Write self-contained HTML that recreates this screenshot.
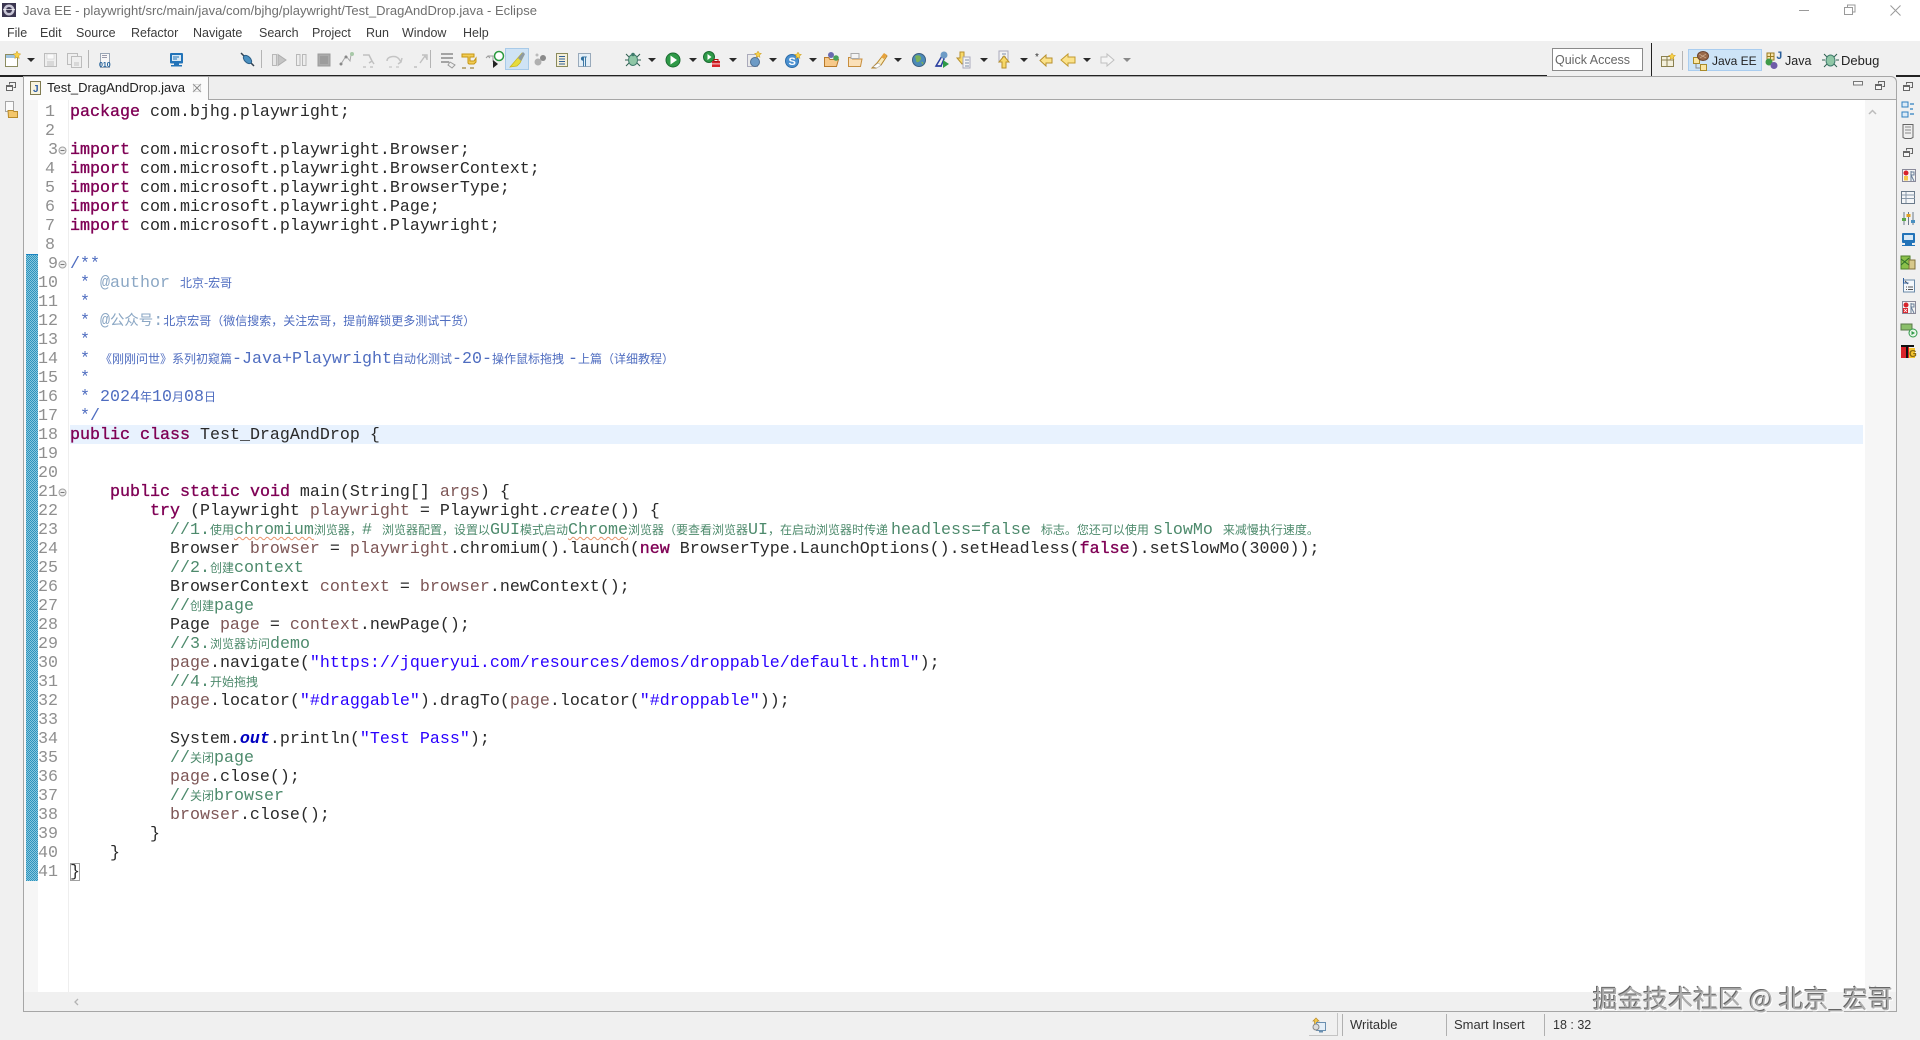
<!DOCTYPE html>
<html lang="zh-CN">
<head>
<meta charset="utf-8">
<title>Java EE - Eclipse</title>
<style>
html,body{margin:0;padding:0;background:#fff;}
body{width:1920px;height:1040px;position:relative;overflow:hidden;font-family:"Liberation Sans","Noto Sans CJK SC",sans-serif;}
.a{position:absolute;}
.t{position:absolute;white-space:pre;font-family:"Liberation Sans","Noto Sans CJK SC",sans-serif;}
.m{top:25px;font-size:12.5px;line-height:16px;color:#3c3c3c;}
.l{position:absolute;left:70px;height:19px;line-height:19px;margin-top:1px;white-space:pre;font-family:"Liberation Mono",monospace;font-size:16.667px;color:#2a2a2a;}
.n{position:absolute;left:30px;width:28px;text-align:right;height:19px;line-height:19px;margin-top:1px;font-family:"Liberation Mono",monospace;font-size:16.667px;color:#8f8f8f;}
.k{color:#7f0055;-webkit-text-stroke:.35px #7f0055;}
.v{color:#7d5656;}
.c{color:#4d8a6c;}
.d{color:#4f6dc0;}
.g{color:#8ba7c4;}
.s{color:#2a00ff;}
.z{font-family:"Noto Sans CJK SC",sans-serif;font-size:12px;line-height:12px;}
.q{text-decoration:underline wavy #e8946a 1px;text-underline-offset:2px;}
</style>
</head>
<body>
<!-- backgrounds -->
<div class="a" style="left:0;top:41px;width:1920px;height:999px;background:#f0f0f0;"></div>
<div class="a" style="left:0;top:75px;width:1547px;height:2px;background:#222;"></div>
<div class="a" style="left:1896px;top:75px;width:24px;height:2px;background:#222;"></div>
<div class="a" style="left:1651px;top:43px;width:1px;height:33px;background:#222;"></div>
<!-- editor pane -->
<div class="a" style="left:23px;top:76px;width:1874px;height:936px;box-sizing:border-box;border:1px solid #a6a6a6;border-top-right-radius:6px;background:#eeeeee;"></div>
<div class="a" style="left:24px;top:99px;width:1872px;height:1px;background:#a6a6a6;"></div>
<div class="a" style="left:24px;top:100px;width:1872px;height:892px;background:#fff;"></div>
<div class="a" style="left:24px;top:100px;width:14px;height:892px;background:#f6f6f6;"></div>
<div class="a" style="left:68px;top:100px;width:1px;height:892px;background:#eeeeee;"></div>
<div class="a" style="left:1865px;top:100px;width:31px;height:892px;background:#f6f6f6;"></div>
<div class="a" style="left:24px;top:992px;width:1872px;height:19px;background:#f0f0f0;"></div>
<!-- change ruler -->
<div class="a" style="left:26px;top:254px;width:12px;height:627px;background-color:#3f9fc4;background-image:conic-gradient(#86c7de 25%,#2e93bd 0 50%,#86c7de 0 75%,#2e93bd 0);background-size:2px 2px;"></div>
<div class="a" style="left:26px;top:254px;width:12px;height:1px;background:#1a84c0;"></div>
<!-- tab -->
<div class="a" style="left:24px;top:76px;width:185px;height:24px;box-sizing:border-box;background:#fbfbfb;border-right:1px solid #a6a6a6;border-top:1px solid #a6a6a6;"></div>
<div class="t" style="left:47px;top:80px;font-size:13px;line-height:16px;color:#1e1e1e;">Test_DragAndDrop.java</div>
<!-- current line -->
<div class="a" style="left:70px;top:425px;width:1793px;height:19px;background:#e8f2fe;"></div>
<!-- bracket match -->
<div class="a" style="left:70px;top:863px;width:10px;height:18px;box-sizing:border-box;border:1px solid #a0a0a0;"></div>

<!-- title + menu -->
<div class="t" style="left:23px;top:3px;font-size:13px;letter-spacing:.02px;line-height:16px;color:#6f6f6f;">Java EE - playwright/src/main/java/com/bjhg/playwright/Test_DragAndDrop.java - Eclipse</div>
<div class="t m" style="left:7px;">File</div>
<div class="t m" style="left:40px;">Edit</div>
<div class="t m" style="left:76px;">Source</div>
<div class="t m" style="left:131px;">Refactor</div>
<div class="t m" style="left:193px;">Navigate</div>
<div class="t m" style="left:259px;">Search</div>
<div class="t m" style="left:312px;">Project</div>
<div class="t m" style="left:366px;">Run</div>
<div class="t m" style="left:402px;">Window</div>
<div class="t m" style="left:463px;">Help</div>

<!-- quick access + perspectives -->
<div class="a" style="left:1552px;top:48px;width:91px;height:23px;box-sizing:border-box;background:#fff;border:1px solid #8a8a8a;"></div>
<div class="t" style="left:1555px;top:52px;font-size:12.5px;line-height:16px;color:#666;">Quick Access</div>
<div class="a" style="left:1682px;top:51px;width:1px;height:19px;background:#b4b4b4;"></div>
<div class="a" style="left:1688px;top:49px;width:74px;height:22px;box-sizing:border-box;background:#cde4f7;border:1px solid #aacdef;"></div>
<div class="t" style="left:1712px;top:53px;font-size:12px;line-height:16px;color:#222;">Java EE</div>
<div class="t" style="left:1785px;top:53px;font-size:12.5px;line-height:16px;color:#222;">Java</div>
<div class="t" style="left:1841px;top:53px;font-size:13px;line-height:16px;color:#222;">Debug</div>

<!-- status -->
<div class="a" style="left:1309px;top:1013px;width:29px;height:23px;box-sizing:border-box;border:1px solid #c4c4c4;border-top:0;border-left:0;"></div>
<div class="a" style="left:1342px;top:1014px;width:1px;height:22px;background:#b0b0b0;"></div>
<div class="a" style="left:1446px;top:1014px;width:1px;height:22px;background:#b0b0b0;"></div>
<div class="a" style="left:1544px;top:1014px;width:1px;height:22px;background:#b0b0b0;"></div>
<div class="t" style="left:1350px;top:1017px;font-size:13px;line-height:16px;color:#333;">Writable</div>
<div class="t" style="left:1454px;top:1017px;font-size:13px;line-height:16px;color:#333;">Smart Insert</div>
<div class="t" style="left:1553px;top:1017px;font-size:12.5px;line-height:16px;color:#333;">18 : 32</div>

<!-- line numbers -->
<div class="n" style="top:102px;width:25px">1</div><div class="n" style="top:121px;width:25px">2</div><div class="n" style="top:140px">3</div><div class="n" style="top:159px;width:25px">4</div><div class="n" style="top:178px;width:25px">5</div><div class="n" style="top:197px;width:25px">6</div><div class="n" style="top:216px;width:25px">7</div><div class="n" style="top:235px;width:25px">8</div><div class="n" style="top:254px;width:28px">9</div><div class="n" style="top:273px">10</div><div class="n" style="top:292px">11</div><div class="n" style="top:311px">12</div><div class="n" style="top:330px">13</div><div class="n" style="top:349px">14</div><div class="n" style="top:368px">15</div><div class="n" style="top:387px">16</div><div class="n" style="top:406px">17</div><div class="n" style="top:425px">18</div><div class="n" style="top:444px">19</div><div class="n" style="top:463px">20</div><div class="n" style="top:482px">21</div><div class="n" style="top:501px">22</div><div class="n" style="top:520px">23</div><div class="n" style="top:539px">24</div><div class="n" style="top:558px">25</div><div class="n" style="top:577px">26</div><div class="n" style="top:596px">27</div><div class="n" style="top:615px">28</div><div class="n" style="top:634px">29</div><div class="n" style="top:653px">30</div><div class="n" style="top:672px">31</div><div class="n" style="top:691px">32</div><div class="n" style="top:710px">33</div><div class="n" style="top:729px">34</div><div class="n" style="top:748px">35</div><div class="n" style="top:767px">36</div><div class="n" style="top:786px">37</div><div class="n" style="top:805px">38</div><div class="n" style="top:824px">39</div><div class="n" style="top:843px">40</div><div class="n" style="top:862px">41</div>

<!-- code -->
<div class="l" style="top:102px"><span class="k">package</span> com.bjhg.playwright;</div>
<div class="l" style="top:140px"><span class="k">import</span> com.microsoft.playwright.Browser;</div>
<div class="l" style="top:159px"><span class="k">import</span> com.microsoft.playwright.BrowserContext;</div>
<div class="l" style="top:178px"><span class="k">import</span> com.microsoft.playwright.BrowserType;</div>
<div class="l" style="top:197px"><span class="k">import</span> com.microsoft.playwright.Page;</div>
<div class="l" style="top:216px"><span class="k">import</span> com.microsoft.playwright.Playwright;</div>
<div class="l d" style="top:254px">/**</div>
<div class="l d" style="top:273px"> * <span class="g">@author</span> <span class="z">北京-宏哥</span></div>
<div class="l d" style="top:292px"> *</div>
<div class="l d" style="top:311px"> * <span class="g">@<span class="z" style="font-size:14.4px">公众号</span>:</span><span class="z">北京宏哥（微信搜索，关注宏哥，提前解锁更多测试干货）</span></div>
<div class="l d" style="top:330px"> *</div>
<div class="l d" style="top:349px"> * <span class="z">《刚刚问世》系列初窥篇</span>-Java+Playwright<span class="z">自动化测试</span>-20-<span class="z">操作鼠标拖拽</span><span style="margin-left:4px">-</span><span class="z">上篇（详细教程）</span></div>
<div class="l d" style="top:368px"> *</div>
<div class="l d" style="top:387px"> * 2024<span class="z">年</span>10<span class="z">月</span>08<span class="z">日</span></div>
<div class="l d" style="top:406px"> */</div>
<div class="l" style="top:425px"><span class="k">public</span> <span class="k">class</span> Test_DragAndDrop {</div>
<div class="l" style="top:482px">    <span class="k">public</span> <span class="k">static</span> <span class="k">void</span> main(String[] <span class="v">args</span>) {</div>
<div class="l" style="top:501px">        <span class="k">try</span> (Playwright <span class="v">playwright</span> = Playwright.<i>create</i>()) {</div>
<div class="l c" style="top:520px">          //1.<span class="z">使用</span><span class="q">chromium</span><span class="z">浏览器，</span># <span class="z">浏览器配置，设置以</span>GUI<span class="z">模式启动</span><span class="q">Chrome</span><span class="z">浏览器（要查看浏览器</span>UI<span class="z">，在启动浏览器时传递</span><span style="margin-left:3px">headless=false </span><span class="z">标志。您还可以使用</span><span style="margin-left:4px">slowMo </span><span class="z">来减慢执行速度。</span></div>
<div class="l" style="top:539px">          Browser <span class="v">browser</span> = <span class="v">playwright</span>.chromium().launch(<span class="k">new</span> BrowserType.LaunchOptions().setHeadless(<span class="k">false</span>).setSlowMo(3000));</div>
<div class="l c" style="top:558px">          //2.<span class="z">创建</span>context</div>
<div class="l" style="top:577px">          BrowserContext <span class="v">context</span> = <span class="v">browser</span>.newContext();</div>
<div class="l c" style="top:596px">          //<span class="z">创建</span>page</div>
<div class="l" style="top:615px">          Page <span class="v">page</span> = <span class="v">context</span>.newPage();</div>
<div class="l c" style="top:634px">          //3.<span class="z">浏览器访问</span>demo</div>
<div class="l" style="top:653px">          <span class="v">page</span>.navigate(<span class="s">"https://jqueryui.com/resources/demos/droppable/default.html"</span>);</div>
<div class="l c" style="top:672px">          //4.<span class="z">开始拖拽</span></div>
<div class="l" style="top:691px">          <span class="v">page</span>.locator(<span class="s">"#draggable"</span>).dragTo(<span class="v">page</span>.locator(<span class="s">"#droppable"</span>));</div>
<div class="l" style="top:729px">          System.<b style="color:#0000c0"><i>out</i></b>.println(<span class="s">"Test Pass"</span>);</div>
<div class="l c" style="top:748px">          //<span class="z">关闭</span>page</div>
<div class="l" style="top:767px">          <span class="v">page</span>.close();</div>
<div class="l c" style="top:786px">          //<span class="z">关闭</span>browser</div>
<div class="l" style="top:805px">          <span class="v">browser</span>.close();</div>
<div class="l" style="top:824px">        }</div>
<div class="l" style="top:843px">    }</div>
<div class="l" style="top:862px">}</div>

<!-- icons -->
<svg class="a" style="left:0;top:0;pointer-events:none;" width="1920" height="1040" viewBox="0 0 1920 1040" xmlns="http://www.w3.org/2000/svg">
<defs>
<path id="ar" d="M0 0h8l-4 4z" fill="#2a2a2a"/>
<g id="rs" fill="none" stroke="#666"><path d="M-1.500 -2.500v-2h6v5h-2"/><rect x="-4.500" y="-1.500" width="6" height="5" fill="#f6f6f6"/><path d="M-4.500 -.5h6"/></g>
</defs>
<!-- app logo -->
<rect x="2" y="3" width="14" height="14" fill="#3b3650"/><circle cx="9" cy="10" r="5.500" fill="#c8c6d6"/><circle cx="9" cy="10" r="3" fill="#3b3650"/><rect x="3" y="9" width="12" height="1" fill="#fff" opacity=".7"/>
<!-- window controls -->
<path d="M1799 10.500h10" stroke="#9a9a9a"/>
<path d="M1844.500 7.500h8v7h-8zM1847.500 7.500v-2.500h7.500v7h-2.500" fill="none" stroke="#9a9a9a"/>
<path d="M1890.500 5.500l10 10M1900.500 5.500l-10 10" stroke="#9a9a9a" fill="none"/>
<!-- toolbar group 1 -->
<rect x="5.500" y="54.500" width="12" height="12" fill="#fff" stroke="#8c8c60"/><rect x="6" y="55" width="11" height="3" fill="#9fc4e0"/><path d="M17 51l1.200 2.500 2.500.5-2 1.800.5 2.700-2.200-1.300-2.200 1.300.5-2.700-2-1.800 2.500-.5z" fill="#f7d14a" stroke="#c79a22" stroke-width=".5"/>
<use href="#ar" x="27" y="58"/>
<rect x="44.500" y="53.500" width="12" height="13" fill="#efefef" stroke="#bcbcbc"/><rect x="47" y="54" width="7" height="5" fill="#fafafa" stroke="#c8c8c8" stroke-width=".5"/><rect x="47" y="61" width="7" height="5" fill="#d8d8d8"/>
<rect x="67.500" y="53.500" width="10" height="11" fill="#efefef" stroke="#bcbcbc"/><rect x="71.500" y="56.500" width="10" height="11" fill="#efefef" stroke="#bcbcbc"/><rect x="74" y="62" width="5" height="4" fill="#d8d8d8"/>
<rect x="88" y="50" width="1" height="18" fill="#b4b4b4"/>
<rect x="100.500" y="53.500" width="9" height="14" fill="#f8f8f8" stroke="#9aa6b5"/><rect x="102" y="55" width="5" height="1" fill="#99a"/><rect x="102" y="57" width="5" height="1" fill="#99a"/><text x="99" y="67" font-family="Liberation Sans" font-size="7" font-weight="bold" fill="#1f5f99">010</text>
<rect x="170" y="53" width="13" height="10.500" rx="1" fill="#2273b8"/><rect x="172" y="55" width="9" height="6" fill="#d7e8f5"/><rect x="173" y="56.500" width="6" height="1" fill="#2273b8"/><rect x="173" y="58.500" width="4" height="1" fill="#2273b8"/><rect x="174" y="63.500" width="5" height="2" fill="#2273b8"/><rect x="171" y="65" width="11" height="1.500" fill="#2273b8"/>
<path d="M241 53l13 13" stroke="#30404f" stroke-width="1.500" fill="none"/><ellipse cx="247.500" cy="59.500" rx="5" ry="3" transform="rotate(45 247.500 59.500)" fill="#4a90c0" stroke="#2c5f88"/>
<rect x="261" y="50" width="1" height="18" fill="#b4b4b4"/>
<!-- debug grey -->
<rect x="272.500" y="54.500" width="4" height="11" fill="#e6e6e6" stroke="#b8b8b8"/><path d="M278 54.500l8 5.500-8 5.500z" fill="#c4c4c4" stroke="#adadad"/>
<rect x="296.500" y="54.500" width="3.500" height="11" fill="#eee" stroke="#b8b8b8"/><rect x="302.500" y="54.500" width="3.500" height="11" fill="#eee" stroke="#b8b8b8"/>
<rect x="318" y="54" width="12" height="12" fill="#ababab" stroke="#9b9b9b"/><rect x="320" y="56" width="8" height="8" fill="#9c9c9c"/>
<path d="M341 64l5-8 4 5 1-6" stroke="#a8a8a8" fill="none"/><circle cx="341" cy="64" r="1.500" fill="#888"/><circle cx="346" cy="57" r="1.500" fill="#888"/><circle cx="352" cy="54" r="2" fill="#a8c8a8"/>
<path d="M363 55h6l3 6M369 63l3-2 2 3" stroke="#c0c0c0" stroke-width="1.500" fill="none"/><path d="M363 67h3M370 67h3" stroke="#b0b0b0"/>
<path d="M387 61c0-5 9-6 12-2l2 3M398 64l3-2 1-4" stroke="#c4c4c4" stroke-width="1.500" fill="none"/><path d="M389 67h3M396 67h3" stroke="#bcbcbc"/>
<path d="M414 67h3M420 63l5-7 2 3M422 55h5v5" stroke="#c0c0c0" stroke-width="1.400" fill="none"/>
<rect x="430" y="50" width="1" height="18" fill="#b4b4b4"/>
<path d="M441 54h12M441 58h12M441 62h8" stroke="#8a8a8a" stroke-width="1.500"/><path d="M450 62l5 3-3 3-4-3z" fill="#eee" stroke="#9a9a9a"/>
<path d="M462 54h12v3h-4v4h4l2-3v4l-2 2h-5l-1-1v-6h-6z" fill="#f3cd55" stroke="#c69612"/><path d="M462 68h4M470 68h4" stroke="#8a6b18"/>
<path d="M488 56h5v6M486 58l2-2 2 2" stroke="#9a9a9a" fill="none"/><circle cx="499" cy="56" r="4.500" fill="#fff" stroke="#2a9a3f" stroke-width="1.500"/><path d="M493 60v8l5-4z" fill="#222"/>
<rect x="505.500" y="48.500" width="23" height="21" fill="#cfe3f5" stroke="#a8cae8"/><path d="M510 67l6-7 6-7 2 2-4 8-3 3z" fill="#e6dc3c" stroke="#c9b51f" stroke-width=".7"/><path d="M518 58l5-6 2 2-4 7z" fill="#8d9aa3"/>
<circle cx="538" cy="62" r="3.500" fill="#b0b0b0"/><circle cx="543" cy="58" r="3" fill="#8a8a8a"/><circle cx="537" cy="55" r="1.500" fill="#bbb"/>
<rect x="556.500" y="53.500" width="11" height="13" fill="#f5efd8" stroke="#8a8a5c"/><path d="M559 56.500h6M559 59h6M559 61.500h6M559 64h6" stroke="#2f5f98"/>
<rect x="578.500" y="53.500" width="12" height="13" fill="#e4eff7" stroke="#9ab"/><text x="580.500" y="65" font-family="Liberation Sans" font-size="12" font-weight="bold" fill="#2f6f9f">¶</text>
<!-- toolbar group 2 -->
<g fill="none" stroke="#2f5f4f" stroke-width="1"><path d="M626 54l3 3M640 54l-3 3M625 60h3M641 60h-3M626 66l3-3M640 66l-3-3"/></g><ellipse cx="633" cy="60" rx="4.500" ry="5.500" fill="#8fc7a6" stroke="#3e7a6b"/><circle cx="633" cy="54.500" r="1.800" fill="#3e7a6b"/>
<use href="#ar" x="648" y="58"/>
<circle cx="673" cy="60" r="7" fill="#2f9a48" stroke="#1b6b31"/><path d="M670.500 55.500l6.500 4.500-6.500 4.500z" fill="#fff"/>
<use href="#ar" x="689" y="58"/>
<circle cx="709" cy="57" r="5.500" fill="#2f9a48" stroke="#1b6b31"/><path d="M707.500 54l4 3-4 3z" fill="#fff"/><rect x="712" y="61" width="8" height="6" fill="#d8232a"/><rect x="714" y="59.500" width="4" height="2" fill="none" stroke="#a11"/><rect x="712" y="63.500" width="8" height=".8" fill="#fff"/>
<use href="#ar" x="729" y="58"/>
<rect x="747.500" y="54.500" width="10" height="12" fill="#eaeaea" stroke="#aab"/><circle cx="755" cy="62" r="4.500" fill="#6d9bc6" stroke="#4e6f92"/><path d="M758 51l1 2 2.500.5-2 1.500.5 2.500-2-1.300-2 1.300.5-2.500-2-1.500 2.500-.5z" fill="#f7d14a" stroke="#c79a22" stroke-width=".5"/>
<use href="#ar" x="769" y="58"/>
<circle cx="792" cy="61" r="6.500" fill="#4a90d0" stroke="#2d6ca8"/><text x="788.500" y="65" font-family="Liberation Sans" font-size="11" font-weight="bold" fill="#fff">S</text><path d="M798 52l1 2 2.500.5-2 1.500.5 2.500-2-1.300-2 1.300.5-2.500-2-1.500 2.500-.5z" fill="#f7d14a" stroke="#c79a22" stroke-width=".5"/>
<use href="#ar" x="809" y="58"/>
<path d="M824.500 66.500v-9h4l1.500 2h8.500l-2 7z" fill="#f7c98a" stroke="#b87a2a"/><circle cx="831" cy="55" r="3" fill="#6a6ab0"/><circle cx="836" cy="58" r="2.800" fill="#4aa25a"/>
<path d="M848.500 66.500v-9h3l1 1.500h9.500l-1.500 7.500z" fill="#fbe0b8" stroke="#c78e3e"/><rect x="851" y="53.500" width="8" height="5" fill="#f4f4f4" stroke="#aaa"/>
<path d="M872 68l5-5 7-9 3 2-6 9-5 3z" fill="#f9e9b8" stroke="#b8862c"/><path d="M881 57l3-4 3 2-3 4z" fill="#e6a23c"/><path d="M873 67l5-4 3 2-4 3z" fill="#fff" stroke="#999" stroke-width=".5"/>
<use href="#ar" x="894" y="58"/>
<circle cx="919" cy="60" r="6.500" fill="#4b8ab8" stroke="#3d5f80"/><path d="M915 56c3-2 7 0 6 3s-5 5-5 1zM921 62c2-1 3 1 2 3z" fill="#7ab05a"/>
<path d="M936 66l6-10 2 3-3 7z" fill="none" stroke="#2a3f9f" stroke-width="1.500"/><circle cx="944" cy="55" r="3.500" fill="#6d9bc6"/><path d="M943 60v8l6-4z" fill="#2f9a48"/><path d="M936 66h6" stroke="#2a3f9f" stroke-width="1.500"/>
<path d="M960 52h4v6h3l-5 6-5-6h3z" fill="#f7d96a" stroke="#b8902c"/><rect x="963" y="57" width="7" height="11" fill="#f3f3f3" stroke="#aab"/><path d="M965 60h4M965 63h4M965 66h4" stroke="#7f8fa8"/>
<use href="#ar" x="980" y="58"/>
<rect x="999" y="51" width="9" height="11" fill="#f3f3f3" stroke="#aab"/><path d="M1002 54h4M1002 57h4" stroke="#7f8fa8"/><path d="M1002 68h4v-6h3l-5-6-5 6h3z" fill="#f7d96a" stroke="#b8902c"/>
<use href="#ar" x="1020" y="58"/>
<path d="M1043 55v3h6v5h-6v3l-6-5.500z" fill="#fbe28a" stroke="#b8902c" transform="translate(3,0)"/><text x="1035" y="60" font-family="Liberation Sans" font-size="10" fill="#333">*</text>
<path d="M1068 54v3h7v6h-7v3l-7-6z" fill="#fbe28a" stroke="#c29a2e"/>
<use href="#ar" x="1083" y="58"/>
<path d="M1107 54v3h-6v6h6v3l7-6z" fill="#f4f4f4" stroke="#c0c0c0"/>
<path d="M1123 58h8l-4 4z" fill="#8a8a8a"/>
<!-- perspectives -->
<rect x="1661.500" y="56.500" width="12" height="10" fill="#f4f0dc" stroke="#8a8050"/><path d="M1661 60h12M1667 57v10" stroke="#8a8050"/><path d="M1672 53l1 2 2.500.5-2 1.500.5 2.500-2-1.300-2 1.300.5-2.500-2-1.500 2.500-.5z" fill="#f7d14a" stroke="#c79a22" stroke-width=".5"/>
<rect x="1693.500" y="57.500" width="6" height="6" fill="#fbe6a0" stroke="#a88a2a"/><rect x="1700.500" y="64.500" width="6" height="6" fill="#fbe6a0" stroke="#a88a2a"/><path d="M1696 64v4h4" stroke="#888" fill="none"/><ellipse cx="1703" cy="56" rx="5.500" ry="4.500" fill="#9a6a4a" stroke="#6b4530"/><path d="M1699 54l7 4M1700 58l6-4" stroke="#d8b89a" stroke-width=".6"/>
<rect x="1767" y="53" width="7" height="7" fill="#f6e3a8" stroke="#9a7a20"/><path d="M1770.500 53v7M1767 56.500h7" stroke="#9a7a20"/><circle cx="1769" cy="62" r="3.500" fill="#3f9a48"/><circle cx="1774" cy="65.500" r="3.500" fill="#6f5ca8"/><text x="1776" y="59" font-family="Liberation Mono" font-size="11" font-weight="bold" fill="#2a5f9a">J</text>
<g fill="none" stroke="#2f5f4f"><path d="M1824 54l3 3M1837 54l-3 3M1822 60h3M1839 60h-3M1824 67l3-3M1837 67l-3-3"/></g><ellipse cx="1830.500" cy="60.500" rx="4.500" ry="5.500" fill="#8fc7a6" stroke="#3e7a6b"/>
<!-- view stack icons -->
<rect x="1853.500" y="81.500" width="9" height="3.500" fill="#f6f6f6" stroke="#777"/>
<use href="#rs" x="1880" y="86"/>
<use href="#rs" x="11" y="87"/>
<use href="#rs" x="1908" y="87"/>
<use href="#rs" x="1908" y="153"/>
<path d="M1869 114l3.500-3.500 3.500 3.500" fill="none" stroke="#bcbcbc" stroke-width="1.500"/>
<path d="M1869 986l3.500 3.500 3.500-3.500" fill="none" stroke="#c8c8c8" stroke-width="1.300"/>
<path d="M78 999l-3 3 3 3" fill="none" stroke="#b4b4b4" stroke-width="1.300"/>
<!-- tab icon and close -->
<rect x="30.500" y="81.500" width="10" height="13" fill="#f8f4df" stroke="#7f7a50"/><text x="33" y="92" font-family="Liberation Sans" font-size="10" font-weight="bold" fill="#2f5fa8">J</text>
<path d="M193 84l8 8M201 84l-8 8" stroke="#8a8a8a" fill="none"/><rect x="193.500" y="84.500" width="7" height="7" fill="none" stroke="#bbb" stroke-width=".5"/>
<!-- left trim package explorer -->
<rect x="5.500" y="101.500" width="8" height="10" fill="#fafafa" stroke="#a6a6a6"/><path d="M8 110.500h5l1 1h3.500v6h-9z" fill="#f3c66b" stroke="#b88a2a"/>
<!-- fold icons -->
<g fill="#eee" stroke="#a0a0a0"><circle cx="62.500" cy="150.500" r="3.500"/><circle cx="62.500" cy="264.500" r="3.500"/><circle cx="62.500" cy="492.500" r="3.500"/></g>
<path d="M60.500 150.500h4M60.500 264.500h4M60.500 492.500h4" stroke="#777"/>
<!-- right trim icons -->
<rect x="1902" y="102" width="6" height="5" fill="#dcebf7" stroke="#2f7fc0"/><rect x="1902" y="112" width="6" height="5" fill="#dcebf7" stroke="#2f7fc0"/><path d="M1910 104h4M1910 109h3M1910 114h4" stroke="#2f7fc0" stroke-width="1.200"/>
<path d="M1903 124.500h10v13l-2 1h-6l-2-1z" fill="#eee" stroke="#666"/><path d="M1905 127h6M1905 130h6M1905 133h6" stroke="#888"/>
<rect x="1902.500" y="169.500" width="13" height="12" fill="#f4f4f4" stroke="#8a8a9a"/><circle cx="1906" cy="173" r="2.500" fill="#d8232a"/><rect x="1904" y="176" width="4" height="4.500" fill="#f5c84a"/><path d="M1911 171v10M1911 172h3v3h-3l3 6" stroke="#6a7f9a" fill="none"/>
<rect x="1901.500" y="191.500" width="13" height="12" fill="#f4f6f8" stroke="#6a7a8a"/><path d="M1902 195h13M1902 198.500h13M1906 192v11" stroke="#8a9aaa"/>
<path d="M1904 212v13M1908.500 212v13M1913 212v13" stroke="#6a7a8a"/><rect x="1902" y="218" width="4" height="3" fill="#5aa84a"/><rect x="1906.500" y="214" width="4" height="3" fill="#e0a020"/><rect x="1911" y="220" width="4" height="3" fill="#4a90c0"/>
<rect x="1902" y="233" width="13" height="10" rx="1" fill="#2273b8"/><rect x="1904" y="235" width="9" height="5" fill="#d7e8f5"/><rect x="1905" y="243" width="7" height="2" fill="#2273b8"/><rect x="1902" y="245" width="13" height="1" fill="#2273b8"/>
<rect x="1901" y="256" width="9" height="13" fill="#8bc04a" stroke="#4e7f2a"/><rect x="1909" y="260" width="6" height="9" fill="#d8c88a" stroke="#7f6f3a"/><path d="M1901 259l8 6M1909 258l-8 7" stroke="#2f6f2a"/>
<rect x="1903.500" y="280" width="11" height="12" fill="#f4f8fc" stroke="#6a8aa8"/><path d="M1905 281l3 3M1908 287h5M1908 289.500h5M1906 287h1M1906 289.500h1" stroke="#555"/><path d="M1902.500 278v5h5" fill="none" stroke="#2f5f9f" transform="translate(1,0)"/>
<rect x="1902.500" y="301.500" width="13" height="12" fill="#f4f4f4" stroke="#8a8a9a"/><circle cx="1906" cy="305" r="2.500" fill="#d8232a"/><rect x="1903" y="308" width="5" height="5" fill="#d8232a"/><path d="M1904 309l3 3M1907 309l-3 3" stroke="#fff" stroke-width=".8"/><path d="M1911 303v10M1911 304h3v3h-3l3 6" stroke="#6a7f9a" fill="none"/>
<rect x="1901" y="324" width="11" height="6" fill="#8bbf6a" stroke="#5a7a4a"/><circle cx="1913" cy="333" r="4" fill="#eaf5ea" stroke="#2f9a48"/><path d="M1911.500 331l3.500 2-3.500 2z" fill="#2f9a48"/>
<rect x="1901" y="345" width="8" height="13" fill="#d8232a"/><path d="M1901 346h13M1907 345v13" stroke="#111" stroke-width="2"/><rect x="1909" y="348" width="6" height="10" fill="#f4c430"/><text x="1909" y="357" font-family="Liberation Sans" font-size="10" font-weight="bold" fill="#8a6a10">G</text>
<!-- status icon -->
<path d="M1313 1021l3-3 3 3h-1.500v3h-3v-3z" fill="#f5c84a" stroke="#b88a2a" stroke-width=".7"/><rect x="1316.500" y="1022.500" width="9" height="8" fill="#e4eef7" stroke="#6a8fb0"/><circle cx="1316" cy="1027" r="3" fill="#ddd" stroke="#888"/><rect x="1319" y="1031" width="4" height="1.500" fill="#6a8fb0"/>
</svg>

<!-- watermark -->
<div class="t" style="left:1593px;top:982px;font-family:'Noto Sans CJK SC','Liberation Sans',sans-serif;font-size:25px;line-height:32px;color:#adadad;text-shadow:-1px -1px 0 #666,1px 1px 0 #fff;letter-spacing:.1px;">掘金技术社区 @ 北京_宏哥</div>
</body>
</html>
